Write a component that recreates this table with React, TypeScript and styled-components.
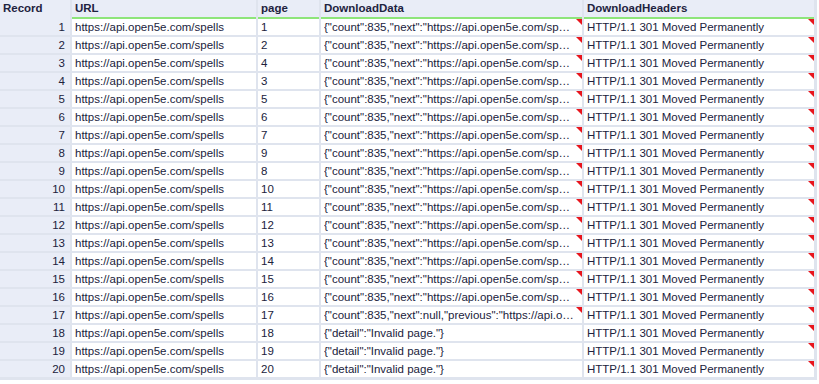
import styled, { createGlobalStyle } from 'styled-components'

const GlobalStyle = createGlobalStyle`
  html, body {
    margin: 0;
    padding: 0;
    background: #ffffff;
  }
  body {
    font-family: "Liberation Sans", Arial, sans-serif;
    font-size: 11.5px;
    color: #20223c;
  }
`

const pages = [1, 2, 4, 3, 5, 6, 7, 9, 8, 10, 11, 12, 13, 14, 15, 16, 17, 18, 19, 20]

const fullData =
  '{"count":835,"next":"https://api.open5e.com/spells/?page=2","previous":null,"results":[]}'
const lastData =
  '{"count":835,"next":null,"previous":"https://api.open5e.com/spells/?page=16","results":[]}'
const invalidData = '{"detail":"Invalid page."}'

type Row = {
  record: number
  page: number
  data: string
  truncated: boolean
}

const rows: Row[] = pages.map((page, i) => {
  const record = i + 1
  if (record <= 16) return { record, page, data: fullData, truncated: true }
  if (record === 17) return { record, page, data: lastData, truncated: true }
  return { record, page, data: invalidData, truncated: false }
})

const App = () => {
  return (
    <>
      <GlobalStyle />
      <Grid>
        <HeadCell>Record</HeadCell>
        <HeadCell $field>URL</HeadCell>
        <HeadCell $field>page</HeadCell>
        <HeadCell $field>DownloadData</HeadCell>
        <HeadCell $field>DownloadHeaders</HeadCell>
        {rows.map(r => (
          <RowGroup key={r.record}>
            <RecordCell>{r.record}</RecordCell>
            <Cell>https://api.open5e.com/spells</Cell>
            <Cell>{r.page}</Cell>
            <Cell $flag={r.truncated}>
              <Text>{r.data}</Text>
            </Cell>
            <Cell $flag>
              <Text>HTTP/1.1 301 Moved Permanently</Text>
            </Cell>
          </RowGroup>
        ))}
      </Grid>
    </>
  )
}

export default App

const Grid = styled.div`
  display: grid;
  grid-template-columns: 70px 184px 61px 261px 230px;
  grid-auto-rows: 16px;
  grid-template-rows: 17px;
  column-gap: 2px;
  row-gap: 2px;
  width: 814px;
  padding: 0 3px 3px 0;
  background: #dfe4ee;
`

const RowGroup = styled.div`
  display: contents;
`

const HeadCell = styled.div<{ $field?: boolean }>`
  background: #e9edf7;
  font-weight: 700;
  padding: 1px 3px 0;
  line-height: 15px;
  white-space: nowrap;
  overflow: hidden;
  color: #1e2340;
  border-bottom: 2px solid ${p => (p.$field ? '#8ee57a' : 'transparent')};
  box-sizing: border-box;
  height: 19px;
  margin-bottom: -2px;
`

const RecordCell = styled.div`
  background: #e9edf7;
  text-align: right;
  padding: 1px 5px 0 0;
  line-height: 15px;
`

const Cell = styled.div<{ $flag?: boolean }>`
  position: relative;
  background: #ffffff;
  padding: 1px 3px 0;
  line-height: 15px;
  white-space: nowrap;
  overflow: hidden;
  min-width: 0;

  &::after {
    content: '';
    display: ${p => (p.$flag ? 'block' : 'none')};
    position: absolute;
    top: 0;
    right: 0;
    width: 0;
    height: 0;
    border-top: 6px solid #e8141c;
    border-left: 6px solid transparent;
  }
`

const Text = styled.div`
  overflow: hidden;
  text-overflow: ellipsis;
  white-space: nowrap;
  padding-right: 3px;
`
